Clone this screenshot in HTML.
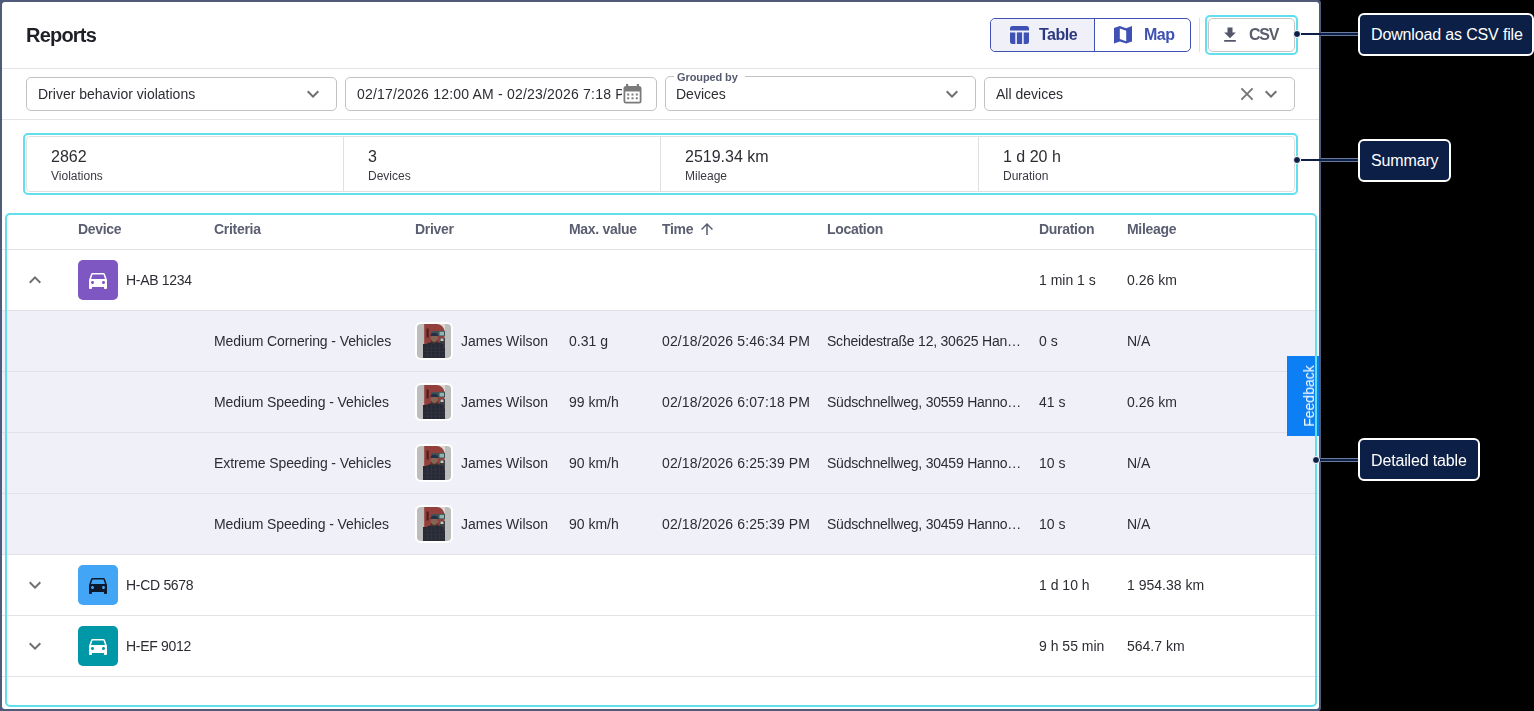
<!DOCTYPE html>
<html><head><meta charset="utf-8">
<style>
*{box-sizing:border-box;margin:0;padding:0}
html,body{width:1534px;height:711px;overflow:hidden;background:#000;font-family:"Liberation Sans",sans-serif;color:#2c2d33;position:relative}
.abs{position:absolute}
.t{position:absolute;white-space:nowrap;line-height:1;will-change:transform}
.input{position:absolute;height:34px;border:1px solid #c2c2c2;border-radius:5px;background:#fff}
.cyan{position:absolute;border:2px solid #62dfed;border-radius:5px}
.callout{position:absolute;height:43px;background:#0c1f47;border:2px solid #fff;border-radius:6px}
.callout span{position:absolute;left:11px;color:#fff;font-size:16px;line-height:1;white-space:nowrap}
.dot{position:absolute;width:7px;height:7px;border-radius:50%;background:#0c1f47}
.devsq{position:absolute;width:40px;height:40px;border-radius:5px}
.avatar{position:absolute;width:38px;height:38px;border-radius:6px;background:#fff}
</style></head>
<body>
<div class="abs" style="left:0;top:0;width:1321px;height:711px;background:#4f5b78;border-radius:0 3px 3px 0"></div>
<div class="abs" style="left:2px;top:2px;width:1317px;height:707px;background:#fff;border-radius:3px"></div>
<div class="t" style="left:26px;top:25px;font-size:20px;color:#1f2026;font-weight:700;letter-spacing:-0.8px;">Reports</div>
<div class="abs" style="left:990px;top:18px;width:201px;height:34px;border:1px solid #3f51b5;border-radius:5px;overflow:hidden"><div class="abs" style="left:0;top:0;width:103px;height:32px;background:#eff0f8;border-radius:4px 0 0 4px"></div><div class="abs" style="left:103px;top:0;width:1px;height:32px;background:#3f51b5"></div></div>
<svg class="abs" style="left:1010px;top:26px" width="19" height="18" viewBox="0 0 19 18" fill="#3f51b5"><path d="M2.5 0h14a2.5 2.5 0 0 1 2.5 2.5V4.6H0V2.5A2.5 2.5 0 0 1 2.5 0z"/><path d="M0 6.4h5.3V18H2.5A2.5 2.5 0 0 1 0 15.5z"/><rect x="6.9" y="6.4" width="5.2" height="11.6"/><path d="M13.7 6.4H19v9.1a2.5 2.5 0 0 1-2.5 2.5h-2.8z"/></svg>
<div class="t" style="left:1039px;top:27px;font-size:16px;color:#2d3882;font-weight:700;letter-spacing:-0.5px;">Table</div>
<svg class="abs" style="left:1114px;top:26px" width="18" height="18" viewBox="0 0 18 18" fill="#3f51b5"><path fill-rule="evenodd" d="M0 2L5.8 0 12.2 2.2 18 0V15.6L12.2 17.6 5.8 15.4 0 17.6z M5.8 2.6V13L12.2 15.2V4.8z"/></svg>
<div class="t" style="left:1144px;top:27px;font-size:16px;color:#3f51b5;font-weight:700;letter-spacing:-0.5px;">Map</div>
<div class="abs" style="left:1199px;top:18px;width:1px;height:34px;background:#e0e0e0;"></div>
<div class="cyan" style="left:1205px;top:15px;width:93px;height:40px;border-radius:5px"></div>
<div class="abs" style="left:1208px;top:18px;width:87px;height:34px;border:1px solid #c6c6c6;border-radius:5px"></div>
<svg class="abs" style="left:1220px;top:25px" width="20" height="20" viewBox="0 0 24 24" fill="#535769"><path d="M19 9h-4V3H9v6H5l7 7 7-7zM5 18v2h14v-2H5z"/></svg>
<div class="t" style="left:1249px;top:27px;font-size:16px;color:#5a5d6e;font-weight:700;letter-spacing:-1.3px;">CSV</div>
<div class="abs" style="left:2px;top:68px;width:1317px;height:1px;background:#e4e4e8;"></div>
<div class="input" style="left:26px;top:77px;width:311px"></div>
<div class="t" style="left:38px;top:87px;font-size:14px;color:#2c2d33;">Driver behavior violations</div>
<svg class="abs" style="left:301px;top:82px" width="24" height="24" viewBox="0 0 24 24" fill="#6f6f6f"><path d="M16.59 8.59L12 13.17 7.41 8.59 6 10l6 6 6-6z"/></svg>
<div class="input" style="left:345px;top:77px;width:312px;overflow:hidden"></div>
<div class="abs" style="left:346px;top:78px;width:276px;height:31px;overflow:hidden">
<div class="t" style="left:11px;top:9px;font-size:14px;color:#2c2d33;letter-spacing:0.2px;">02/17/2026 12:00 AM - 02/23/2026 7:18 PM</div>
</div>
<svg class="abs" style="left:623px;top:84px" width="19" height="20" viewBox="0 0 19 20"><rect x="3" y="0" width="2.2" height="3" fill="#7b7b7b"/><rect x="13.8" y="0" width="2.2" height="3" fill="#7b7b7b"/><rect x="0.5" y="2" width="18" height="17.5" rx="2.5" fill="#7b7b7b"/><rect x="2.3" y="7.5" width="14.4" height="10.2" fill="#fff"/><g fill="#7b7b7b"><rect x="4.2" y="9.5" width="2" height="2"/><rect x="8.5" y="9.5" width="2" height="2"/><rect x="12.8" y="9.5" width="2" height="2"/><rect x="4.2" y="13.3" width="2" height="2"/><rect x="8.5" y="13.3" width="2" height="2"/><rect x="12.8" y="13.3" width="2" height="2"/></g></svg>
<div class="input" style="left:665px;top:76px;width:311px;height:35px"></div>
<div class="abs" style="left:674px;top:72px;width:71px;height:8px;background:#fff;"></div>
<div class="t" style="left:677px;top:72px;font-size:11px;color:#555a6e;font-weight:700;letter-spacing:-0.1px;">Grouped by</div>
<div class="t" style="left:676px;top:87px;font-size:14px;color:#2c2d33;">Devices</div>
<svg class="abs" style="left:940px;top:82px" width="24" height="24" viewBox="0 0 24 24" fill="#6f6f6f"><path d="M16.59 8.59L12 13.17 7.41 8.59 6 10l6 6 6-6z"/></svg>
<div class="input" style="left:984px;top:77px;width:311px"></div>
<div class="t" style="left:996px;top:87px;font-size:14px;color:#2c2d33;">All devices</div>
<svg class="abs" style="left:1239px;top:86px" width="16" height="16" viewBox="0 0 16 16" stroke="#757575" stroke-width="1.9" stroke-linecap="butt"><path d="M2.4 2.4L13.6 13.6M13.6 2.4L2.4 13.6"/></svg>
<svg class="abs" style="left:1259px;top:82px" width="24" height="24" viewBox="0 0 24 24" fill="#6f6f6f"><path d="M16.59 8.59L12 13.17 7.41 8.59 6 10l6 6 6-6z"/></svg>
<div class="abs" style="left:2px;top:119px;width:1317px;height:1px;background:#e4e4e8;"></div>
<div class="cyan" style="left:23px;top:133px;width:275px;height:62px;width:1275px"></div>
<div class="abs" style="left:26px;top:136px;width:1269px;height:56px;border:1px solid #e0e0e0;border-radius:4px"></div>
<div class="t" style="left:51px;top:149px;font-size:16px;color:#2c2d33;">2862</div>
<div class="t" style="left:51px;top:170px;font-size:12px;color:#3a3b42;">Violations</div>
<div class="abs" style="left:343px;top:137px;width:1px;height:54px;background:#e0e0e0;"></div>
<div class="t" style="left:368px;top:149px;font-size:16px;color:#2c2d33;">3</div>
<div class="t" style="left:368px;top:170px;font-size:12px;color:#3a3b42;">Devices</div>
<div class="abs" style="left:660px;top:137px;width:1px;height:54px;background:#e0e0e0;"></div>
<div class="t" style="left:685px;top:149px;font-size:16px;color:#2c2d33;">2519.34 km</div>
<div class="t" style="left:685px;top:170px;font-size:12px;color:#3a3b42;">Mileage</div>
<div class="abs" style="left:978px;top:137px;width:1px;height:54px;background:#e0e0e0;"></div>
<div class="t" style="left:1003px;top:149px;font-size:16px;color:#2c2d33;">1 d 20 h</div>
<div class="t" style="left:1003px;top:170px;font-size:12px;color:#3a3b42;">Duration</div>
<div class="t" style="left:78px;top:222px;font-size:14px;color:#5a5e70;font-weight:700;letter-spacing:-0.3px;">Device</div>
<div class="t" style="left:214px;top:222px;font-size:14px;color:#5a5e70;font-weight:700;letter-spacing:-0.3px;">Criteria</div>
<div class="t" style="left:415px;top:222px;font-size:14px;color:#5a5e70;font-weight:700;letter-spacing:-0.3px;">Driver</div>
<div class="t" style="left:569px;top:222px;font-size:14px;color:#5a5e70;font-weight:700;letter-spacing:-0.3px;">Max. value</div>
<div class="t" style="left:662px;top:222px;font-size:14px;color:#5a5e70;font-weight:700;letter-spacing:-0.3px;">Time</div>
<div class="t" style="left:827px;top:222px;font-size:14px;color:#5a5e70;font-weight:700;letter-spacing:-0.3px;">Location</div>
<div class="t" style="left:1039px;top:222px;font-size:14px;color:#5a5e70;font-weight:700;letter-spacing:-0.3px;">Duration</div>
<div class="t" style="left:1127px;top:222px;font-size:14px;color:#5a5e70;font-weight:700;letter-spacing:-0.3px;">Mileage</div>
<svg class="abs" style="left:698px;top:220px" width="18" height="18" viewBox="0 0 24 24" fill="#555a6e"><path d="M4 12l1.41 1.41L11 7.83V20h2V7.83l5.58 5.59L20 12l-8-8-8 8z"/></svg>
<div class="abs" style="left:2px;top:249px;width:1317px;height:1px;background:#e2e2e6;"></div>
<svg class="abs" style="left:23px;top:268px" width="24" height="24" viewBox="0 0 24 24" fill="#707070"><path d="M12 8l-6 6 1.41 1.41L12 10.83l4.59 4.58L18 14z"/></svg>
<div class="devsq" style="left:78px;top:260px;background:#7e57c2"></div>
<svg class="abs" style="left:86px;top:268px" width="24" height="24" viewBox="0 0 24 24" fill="#fff"><path fill-rule="evenodd" d="M18.92 6.01C18.72 5.42 18.16 5 17.5 5h-11c-.66 0-1.21.42-1.42 1.01L3 12v8c0 .55.45 1 1 1h1c.55 0 1-.45 1-1v-1h12v1c0 .55.45 1 1 1h1c.55 0 1-.45 1-1v-8l-2.08-5.99zM6.5 16c-.83 0-1.5-.67-1.5-1.5S5.67 13 6.5 13s1.5.67 1.5 1.5S7.33 16 6.5 16zm11 0c-.83 0-1.5-.67-1.5-1.5s.67-1.5 1.5-1.5 1.5.67 1.5 1.5-.67 1.5-1.5 1.5zM5 11l1.5-4.5h11L19 11H5z"/></svg>
<div class="t" style="left:126px;top:273px;font-size:14px;color:#2c2d33;letter-spacing:-0.3px;">H-AB 1234</div>
<div class="t" style="left:1039px;top:273px;font-size:14px;color:#2c2d33;">1 min 1 s</div>
<div class="t" style="left:1127px;top:273px;font-size:14px;color:#2c2d33;">0.26 km</div>
<div class="abs" style="left:2px;top:310px;width:1317px;height:1px;background:#e2e2e6;"></div>
<div class="abs" style="left:2px;top:311px;width:1317px;height:60px;background:#f0f0f8;"></div>
<div class="t" style="left:214px;top:334px;font-size:14px;color:#2c2d33;letter-spacing:-0.1px;">Medium Cornering - Vehicles</div>
<div class="avatar" style="left:415px;top:322px"></div>
<div class="abs" style="left:417px;top:324px;width:34px;height:34px;border-radius:4px;background:#bdbdbd;overflow:hidden"><div class="abs" style="left:6px;top:0"><svg width="22" height="34" viewBox="0 0 22 34"><rect width="22" height="34" fill="#dcd8d2"/><path d="M0 0H14C18.5 0.5 20.5 3 21.5 7V34H0z" fill="#93403d"/><rect x="0" y="0" width="1.2" height="34" fill="#c9b5b3"/><path d="M3.5 4.5h2.2v9h-2.2z" fill="#4a1f1e"/><path d="M8 7.2L22 6.8V12.2L8 12z" fill="#3e5457"/><path d="M16.5 7.8h4.5v3.6h-4.5z" fill="#8fb3ad"/><path d="M17 14h5v8h-5z" fill="#3b3e42"/><path d="M17.5 14.5h3v2.5h-3z" fill="#c9c4bd"/><path d="M0 20h3v14H0z" fill="#3a2220"/><ellipse cx="11.3" cy="14.8" rx="3.7" ry="4.8" fill="#866555"/><path d="M7.5 12C7.3 7.6 15.3 7.6 15.1 12z" fill="#243049"/><path d="M7.9 15.5Q11.3 20.5 14.8 15.5L14.8 18Q11.3 22 7.9 18z" fill="#4a372c"/><path d="M0.5 34V23.5C1.2 20.5 4.5 19 8 18.2L11.3 19.8 14.6 18.2C18.5 19 21.5 20.5 22 23.5V34z" fill="#262b37"/><g stroke="#5a4a3e" stroke-width="0.5" opacity="0.45"><path d="M1.2 24H22M1.2 27.5H22M1.2 31H22M4.5 20.5V34M8.5 19.5V34M12.5 20.5V34M16.5 19.5V34M20 21V34"/></g></svg></div></div>
<div class="t" style="left:461px;top:334px;font-size:14px;color:#2c2d33;">James Wilson</div>
<div class="t" style="left:569px;top:334px;font-size:14px;color:#2c2d33;">0.31 g</div>
<div class="t" style="left:662px;top:334px;font-size:14px;color:#2c2d33;letter-spacing:0.12px;">02/18/2026 5:46:34 PM</div>
<div class="t" style="left:827px;top:334px;font-size:14px;color:#2c2d33;letter-spacing:-0.22px;">Scheidestraße 12, 30625 Han…</div>
<div class="t" style="left:1039px;top:334px;font-size:14px;color:#2c2d33;">0 s</div>
<div class="t" style="left:1127px;top:334px;font-size:14px;color:#2c2d33;">N/A</div>
<div class="abs" style="left:2px;top:371px;width:1317px;height:1px;background:#e2e2e6;"></div>
<div class="abs" style="left:2px;top:372px;width:1317px;height:60px;background:#f0f0f8;"></div>
<div class="t" style="left:214px;top:395px;font-size:14px;color:#2c2d33;letter-spacing:-0.1px;">Medium Speeding - Vehicles</div>
<div class="avatar" style="left:415px;top:383px"></div>
<div class="abs" style="left:417px;top:385px;width:34px;height:34px;border-radius:4px;background:#bdbdbd;overflow:hidden"><div class="abs" style="left:6px;top:0"><svg width="22" height="34" viewBox="0 0 22 34"><rect width="22" height="34" fill="#dcd8d2"/><path d="M0 0H14C18.5 0.5 20.5 3 21.5 7V34H0z" fill="#93403d"/><rect x="0" y="0" width="1.2" height="34" fill="#c9b5b3"/><path d="M3.5 4.5h2.2v9h-2.2z" fill="#4a1f1e"/><path d="M8 7.2L22 6.8V12.2L8 12z" fill="#3e5457"/><path d="M16.5 7.8h4.5v3.6h-4.5z" fill="#8fb3ad"/><path d="M17 14h5v8h-5z" fill="#3b3e42"/><path d="M17.5 14.5h3v2.5h-3z" fill="#c9c4bd"/><path d="M0 20h3v14H0z" fill="#3a2220"/><ellipse cx="11.3" cy="14.8" rx="3.7" ry="4.8" fill="#866555"/><path d="M7.5 12C7.3 7.6 15.3 7.6 15.1 12z" fill="#243049"/><path d="M7.9 15.5Q11.3 20.5 14.8 15.5L14.8 18Q11.3 22 7.9 18z" fill="#4a372c"/><path d="M0.5 34V23.5C1.2 20.5 4.5 19 8 18.2L11.3 19.8 14.6 18.2C18.5 19 21.5 20.5 22 23.5V34z" fill="#262b37"/><g stroke="#5a4a3e" stroke-width="0.5" opacity="0.45"><path d="M1.2 24H22M1.2 27.5H22M1.2 31H22M4.5 20.5V34M8.5 19.5V34M12.5 20.5V34M16.5 19.5V34M20 21V34"/></g></svg></div></div>
<div class="t" style="left:461px;top:395px;font-size:14px;color:#2c2d33;">James Wilson</div>
<div class="t" style="left:569px;top:395px;font-size:14px;color:#2c2d33;">99 km/h</div>
<div class="t" style="left:662px;top:395px;font-size:14px;color:#2c2d33;letter-spacing:0.12px;">02/18/2026 6:07:18 PM</div>
<div class="t" style="left:827px;top:395px;font-size:14px;color:#2c2d33;letter-spacing:-0.22px;">Südschnellweg, 30559 Hanno…</div>
<div class="t" style="left:1039px;top:395px;font-size:14px;color:#2c2d33;">41 s</div>
<div class="t" style="left:1127px;top:395px;font-size:14px;color:#2c2d33;">0.26 km</div>
<div class="abs" style="left:2px;top:432px;width:1317px;height:1px;background:#e2e2e6;"></div>
<div class="abs" style="left:2px;top:433px;width:1317px;height:60px;background:#f0f0f8;"></div>
<div class="t" style="left:214px;top:456px;font-size:14px;color:#2c2d33;letter-spacing:-0.1px;">Extreme Speeding - Vehicles</div>
<div class="avatar" style="left:415px;top:444px"></div>
<div class="abs" style="left:417px;top:446px;width:34px;height:34px;border-radius:4px;background:#bdbdbd;overflow:hidden"><div class="abs" style="left:6px;top:0"><svg width="22" height="34" viewBox="0 0 22 34"><rect width="22" height="34" fill="#dcd8d2"/><path d="M0 0H14C18.5 0.5 20.5 3 21.5 7V34H0z" fill="#93403d"/><rect x="0" y="0" width="1.2" height="34" fill="#c9b5b3"/><path d="M3.5 4.5h2.2v9h-2.2z" fill="#4a1f1e"/><path d="M8 7.2L22 6.8V12.2L8 12z" fill="#3e5457"/><path d="M16.5 7.8h4.5v3.6h-4.5z" fill="#8fb3ad"/><path d="M17 14h5v8h-5z" fill="#3b3e42"/><path d="M17.5 14.5h3v2.5h-3z" fill="#c9c4bd"/><path d="M0 20h3v14H0z" fill="#3a2220"/><ellipse cx="11.3" cy="14.8" rx="3.7" ry="4.8" fill="#866555"/><path d="M7.5 12C7.3 7.6 15.3 7.6 15.1 12z" fill="#243049"/><path d="M7.9 15.5Q11.3 20.5 14.8 15.5L14.8 18Q11.3 22 7.9 18z" fill="#4a372c"/><path d="M0.5 34V23.5C1.2 20.5 4.5 19 8 18.2L11.3 19.8 14.6 18.2C18.5 19 21.5 20.5 22 23.5V34z" fill="#262b37"/><g stroke="#5a4a3e" stroke-width="0.5" opacity="0.45"><path d="M1.2 24H22M1.2 27.5H22M1.2 31H22M4.5 20.5V34M8.5 19.5V34M12.5 20.5V34M16.5 19.5V34M20 21V34"/></g></svg></div></div>
<div class="t" style="left:461px;top:456px;font-size:14px;color:#2c2d33;">James Wilson</div>
<div class="t" style="left:569px;top:456px;font-size:14px;color:#2c2d33;">90 km/h</div>
<div class="t" style="left:662px;top:456px;font-size:14px;color:#2c2d33;letter-spacing:0.12px;">02/18/2026 6:25:39 PM</div>
<div class="t" style="left:827px;top:456px;font-size:14px;color:#2c2d33;letter-spacing:-0.22px;">Südschnellweg, 30459 Hanno…</div>
<div class="t" style="left:1039px;top:456px;font-size:14px;color:#2c2d33;">10 s</div>
<div class="t" style="left:1127px;top:456px;font-size:14px;color:#2c2d33;">N/A</div>
<div class="abs" style="left:2px;top:493px;width:1317px;height:1px;background:#e2e2e6;"></div>
<div class="abs" style="left:2px;top:494px;width:1317px;height:60px;background:#f0f0f8;"></div>
<div class="t" style="left:214px;top:517px;font-size:14px;color:#2c2d33;letter-spacing:-0.1px;">Medium Speeding - Vehicles</div>
<div class="avatar" style="left:415px;top:505px"></div>
<div class="abs" style="left:417px;top:507px;width:34px;height:34px;border-radius:4px;background:#bdbdbd;overflow:hidden"><div class="abs" style="left:6px;top:0"><svg width="22" height="34" viewBox="0 0 22 34"><rect width="22" height="34" fill="#dcd8d2"/><path d="M0 0H14C18.5 0.5 20.5 3 21.5 7V34H0z" fill="#93403d"/><rect x="0" y="0" width="1.2" height="34" fill="#c9b5b3"/><path d="M3.5 4.5h2.2v9h-2.2z" fill="#4a1f1e"/><path d="M8 7.2L22 6.8V12.2L8 12z" fill="#3e5457"/><path d="M16.5 7.8h4.5v3.6h-4.5z" fill="#8fb3ad"/><path d="M17 14h5v8h-5z" fill="#3b3e42"/><path d="M17.5 14.5h3v2.5h-3z" fill="#c9c4bd"/><path d="M0 20h3v14H0z" fill="#3a2220"/><ellipse cx="11.3" cy="14.8" rx="3.7" ry="4.8" fill="#866555"/><path d="M7.5 12C7.3 7.6 15.3 7.6 15.1 12z" fill="#243049"/><path d="M7.9 15.5Q11.3 20.5 14.8 15.5L14.8 18Q11.3 22 7.9 18z" fill="#4a372c"/><path d="M0.5 34V23.5C1.2 20.5 4.5 19 8 18.2L11.3 19.8 14.6 18.2C18.5 19 21.5 20.5 22 23.5V34z" fill="#262b37"/><g stroke="#5a4a3e" stroke-width="0.5" opacity="0.45"><path d="M1.2 24H22M1.2 27.5H22M1.2 31H22M4.5 20.5V34M8.5 19.5V34M12.5 20.5V34M16.5 19.5V34M20 21V34"/></g></svg></div></div>
<div class="t" style="left:461px;top:517px;font-size:14px;color:#2c2d33;">James Wilson</div>
<div class="t" style="left:569px;top:517px;font-size:14px;color:#2c2d33;">90 km/h</div>
<div class="t" style="left:662px;top:517px;font-size:14px;color:#2c2d33;letter-spacing:0.12px;">02/18/2026 6:25:39 PM</div>
<div class="t" style="left:827px;top:517px;font-size:14px;color:#2c2d33;letter-spacing:-0.22px;">Südschnellweg, 30459 Hanno…</div>
<div class="t" style="left:1039px;top:517px;font-size:14px;color:#2c2d33;">10 s</div>
<div class="t" style="left:1127px;top:517px;font-size:14px;color:#2c2d33;">N/A</div>
<div class="abs" style="left:2px;top:554px;width:1317px;height:1px;background:#e2e2e6;"></div>
<svg class="abs" style="left:23px;top:573px" width="24" height="24" viewBox="0 0 24 24" fill="#707070"><path d="M16.59 8.59L12 13.17 7.41 8.59 6 10l6 6 6-6z"/></svg>
<div class="devsq" style="left:78px;top:565px;background:#42a5f5"></div>
<svg class="abs" style="left:86px;top:573px" width="24" height="24" viewBox="0 0 24 24" fill="#0d1a2b"><path fill-rule="evenodd" d="M18.92 6.01C18.72 5.42 18.16 5 17.5 5h-11c-.66 0-1.21.42-1.42 1.01L3 12v8c0 .55.45 1 1 1h1c.55 0 1-.45 1-1v-1h12v1c0 .55.45 1 1 1h1c.55 0 1-.45 1-1v-8l-2.08-5.99zM6.5 16c-.83 0-1.5-.67-1.5-1.5S5.67 13 6.5 13s1.5.67 1.5 1.5S7.33 16 6.5 16zm11 0c-.83 0-1.5-.67-1.5-1.5s.67-1.5 1.5-1.5 1.5.67 1.5 1.5-.67 1.5-1.5 1.5zM5 11l1.5-4.5h11L19 11H5z"/></svg>
<div class="t" style="left:126px;top:578px;font-size:14px;color:#2c2d33;letter-spacing:-0.3px;">H-CD 5678</div>
<div class="t" style="left:1039px;top:578px;font-size:14px;color:#2c2d33;">1 d 10 h</div>
<div class="t" style="left:1127px;top:578px;font-size:14px;color:#2c2d33;">1 954.38 km</div>
<div class="abs" style="left:2px;top:615px;width:1317px;height:1px;background:#e2e2e6;"></div>
<svg class="abs" style="left:23px;top:634px" width="24" height="24" viewBox="0 0 24 24" fill="#707070"><path d="M16.59 8.59L12 13.17 7.41 8.59 6 10l6 6 6-6z"/></svg>
<div class="devsq" style="left:78px;top:626px;background:#0097a7"></div>
<svg class="abs" style="left:86px;top:634px" width="24" height="24" viewBox="0 0 24 24" fill="#fff"><path fill-rule="evenodd" d="M18.92 6.01C18.72 5.42 18.16 5 17.5 5h-11c-.66 0-1.21.42-1.42 1.01L3 12v8c0 .55.45 1 1 1h1c.55 0 1-.45 1-1v-1h12v1c0 .55.45 1 1 1h1c.55 0 1-.45 1-1v-8l-2.08-5.99zM6.5 16c-.83 0-1.5-.67-1.5-1.5S5.67 13 6.5 13s1.5.67 1.5 1.5S7.33 16 6.5 16zm11 0c-.83 0-1.5-.67-1.5-1.5s.67-1.5 1.5-1.5 1.5.67 1.5 1.5-.67 1.5-1.5 1.5zM5 11l1.5-4.5h11L19 11H5z"/></svg>
<div class="t" style="left:126px;top:639px;font-size:14px;color:#2c2d33;letter-spacing:-0.3px;">H-EF 9012</div>
<div class="t" style="left:1039px;top:639px;font-size:14px;color:#2c2d33;">9 h 55 min</div>
<div class="t" style="left:1127px;top:639px;font-size:14px;color:#2c2d33;">564.7 km</div>
<div class="abs" style="left:2px;top:676px;width:1317px;height:1px;background:#e2e2e6;"></div>
<div class="abs" style="left:1287px;top:356px;width:32px;height:80px;background:#0b7ff3"></div>
<div class="t" style="left:1309px;top:396px;font-size:14px;color:#fff;transform:translate(-50%,-50%) rotate(-90deg);transform-origin:center">Feedback</div>
<div class="cyan" style="left:5px;top:213px;width:1312px;height:494px"></div>
<div class="callout" style="left:1358px;top:13px;width:176px"><span style="top:12px;letter-spacing:-0.15px">Download as CSV file</span></div>
<div class="abs" style="left:1321px;top:32.4px;width:37px;height:4px;background:#6b7a9c"></div>
<div class="abs" style="left:1301px;top:33.4px;width:57px;height:2px;background:#0c1f47"></div>
<div class="abs" style="left:1293px;top:30.4px;width:8px;height:8px;border-radius:50%;background:#0c1f47;border:1px solid #fff"></div>
<div class="callout" style="left:1358px;top:139px;width:93px"><span style="top:12px;letter-spacing:-0.15px">Summary</span></div>
<div class="abs" style="left:1321px;top:158.3px;width:37px;height:4px;background:#6b7a9c"></div>
<div class="abs" style="left:1301px;top:159.3px;width:57px;height:2px;background:#0c1f47"></div>
<div class="abs" style="left:1293px;top:156.3px;width:8px;height:8px;border-radius:50%;background:#0c1f47;border:1px solid #fff"></div>
<div class="callout" style="left:1358px;top:438px;width:122px"><span style="top:13px;letter-spacing:-0.15px">Detailed table</span></div>
<div class="abs" style="left:1321px;top:457.5px;width:37px;height:4px;background:#6b7a9c"></div>
<div class="abs" style="left:1320px;top:458.5px;width:38px;height:2px;background:#0c1f47"></div>
<div class="abs" style="left:1312px;top:455.5px;width:8px;height:8px;border-radius:50%;background:#0c1f47;border:1px solid #fff"></div>
</body></html>
